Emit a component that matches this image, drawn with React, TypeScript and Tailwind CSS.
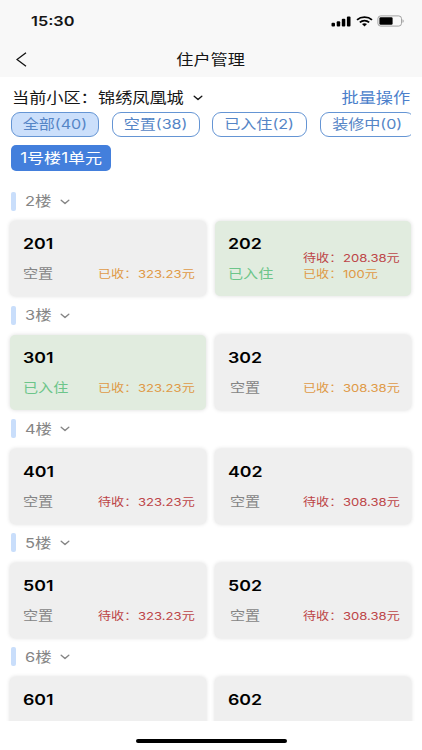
import React from 'react';

type Fee = { label: string; amount: string; tone: 'due' | 'paid' };
type Room = { no: string; occupied?: boolean; fees?: Fee[] };
type Floor = { name: string; rooms: Room[] };

const due = (amount: string): Fee => ({ label: '待收：', amount, tone: 'due' });
const paid = (amount: string): Fee => ({ label: '已收：', amount, tone: 'paid' });

const floors: Floor[] = [
  { name: '2楼', rooms: [{ no: '201', fees: [paid('323.23元')] }, { no: '202', occupied: true, fees: [due('208.38元'), paid('100元')] }] },
  { name: '3楼', rooms: [{ no: '301', occupied: true, fees: [paid('323.23元')] }, { no: '302', fees: [paid('308.38元')] }] },
  { name: '4楼', rooms: [{ no: '401', fees: [due('323.23元')] }, { no: '402', fees: [due('308.38元')] }] },
  { name: '5楼', rooms: [{ no: '501', fees: [due('323.23元')] }, { no: '502', fees: [due('308.38元')] }] },
  { name: '6楼', rooms: [{ no: '601' }, { no: '602' }] },
];

const filters = [
  { text: '全部(40)', box: 'w-[88px] mr-[13px] bg-[#cbdffb]' },
  { text: '空置(38)', box: 'w-[88px] mr-[12px]' },
  { text: '已入住(2)', box: 'w-[95px] mr-[13px]' },
  { text: '装修中(0)', box: 'w-[95px]' },
];

/* Wide lettering: text is stretched horizontally from its anchor side. */
function Wide({ className = '', children }: { className?: string; children: React.ReactNode }) {
  return <span className={`inline-block scale-x-[1.2] whitespace-nowrap ${className}`}>{children}</span>;
}

function Chevron({ className }: { className: string }) {
  return (
    <svg className={className} viewBox="0 0 10 6" fill="none" stroke="currentColor" strokeWidth="1.4" strokeLinecap="round" strokeLinejoin="round">
      <path d="M1.2 1.2 5 4.5 8.8 1.2" />
    </svg>
  );
}

function StatusBar() {
  return (
    <div className="flex h-[42px] items-center pl-[31px] pr-[18px]">
      <Wide className="origin-left text-[13.6px] leading-[20px] font-semibold">15:30</Wide>
      <div className="ml-auto flex items-center">
        <svg className="h-[11px] w-[20px]" viewBox="0 0 20 11">
          <rect x="0.5" y="6.8" width="3.5" height="3.7" rx="1" />
          <rect x="5.7" y="5.2" width="3.5" height="5.3" rx="1" />
          <rect x="10.8" y="2.8" width="3.5" height="7.7" rx="1" />
          <rect x="15.9" y="0.6" width="3.6" height="9.9" rx="1" />
        </svg>
        <svg className="ml-[5px] h-[11px] w-[17px]" viewBox="0 0 17 11" fill="none" stroke="black" strokeWidth="1.8">
          <path d="M1 3.9C5.1.3 11.9.3 16 3.9" />
          <path d="M3.8 6.4c2.7-2.2 6.7-2.2 9.4 0" />
          <path d="M6 8.1c1.5-1.1 3.5-1.1 5 0L8.5 10.4Z" fill="black" stroke="none" />
        </svg>
        <svg className="ml-[4px] h-[12px] w-[27px]" viewBox="0 0 27 12">
          <rect x="0.9" y="0.9" width="23.6" height="10.2" rx="2.8" fill="none" stroke="#999" strokeWidth="0.9" />
          <rect x="2.4" y="2.3" width="13.2" height="7.4" rx="1.2" />
          <path d="M25.6 4.2c1.3.5 1.3 3.1 0 3.6Z" fill="#888" />
        </svg>
      </div>
    </div>
  );
}

function RoomCard({ room, right }: { room: Room; right: boolean }) {
  return (
    <div className={`h-[75px] w-[196px] rounded-[5px] pl-[12.5px] pt-[12px] shadow-[0_0_4px_rgba(0,0,0,0.15)] ${room.occupied ? 'bg-[#e1ecdf]' : 'bg-[#efefef]'}`}>
      <div className="flex h-[22px] items-center">
        <Wide className="origin-left text-[14.8px] leading-[22px] font-semibold text-black">{room.no}</Wide>
      </div>
      {room.fees && (
        <div className="flex h-[27px] items-end">
          <div className={`w-[75.5px] text-[12.6px] leading-[16px] ${room.occupied ? 'text-[#6cc58a]' : 'text-[#858585]'} ${right && !room.occupied ? 'pl-[2px]' : ''}`}>
            <Wide className="origin-left">{room.occupied ? '已入住' : '空置'}</Wide>
          </div>
          <div className="flex flex-col">
            {room.fees.map((fee) => (
              <div key={fee.label} className={`flex h-[16px] items-center text-[10.9px] leading-[16px] ${fee.tone === 'due' ? 'text-[#bd4548]' : 'text-[#df9a47]'}`}>
                <Wide className="w-[40px] origin-left">{fee.label}</Wide>
                <Wide className="origin-left">{fee.amount}</Wide>
              </div>
            ))}
          </div>
        </div>
      )}
    </div>
  );
}

export default function App() {
  return (
    <div className="flex h-[750px] w-[422px] flex-col overflow-hidden bg-white font-['Inter','Noto_Sans_CJK_SC',sans-serif] text-[#151515]">
      <header className="h-[77px] shrink-0 bg-[#f8f8f8]">
        <StatusBar />
        <div className="flex h-[34px] items-center pl-[16px]">
          <svg className="h-[15px] w-[11px]" viewBox="0 0 11 15" fill="none" stroke="#111" strokeWidth="1.3">
            <path d="M10 .8 1 7.5l9 6.7" />
          </svg>
          <div className="-ml-[27px] flex-1 text-center">
            <Wide className="text-[14.3px] leading-[22px]">住户管理</Wide>
          </div>
        </div>
      </header>

      <div className="flex h-[35px] shrink-0 items-center pt-[6px] pl-[12px] pr-[12px] text-[14.3px] leading-[22px]">
        <Wide className="w-[86px] origin-left">当前小区：</Wide>
        <Wide className="w-[94.5px] origin-left">锦绣凤凰城</Wide>
        <Chevron className="h-[6px] w-[10px]" />
        <Wide className="ml-auto origin-right text-[#4c7fcb]">批量操作</Wide>
      </div>

      <div className="mr-[11px] ml-[11px] flex h-[25px] shrink-0 overflow-hidden">
        {filters.map((f) => (
          <div key={f.text} className={`flex h-[25px] shrink-0 items-center justify-center rounded-[9px] border border-[#6595d4] pb-[1px] text-[13.4px] leading-[20px] text-[#5585c6] ${f.box}`}>
            <Wide>{f.text}</Wide>
          </div>
        ))}
      </div>

      <div className="mt-[8px] ml-[11px] flex h-[26px] w-[100px] shrink-0 items-center justify-center rounded-[5px] bg-[#437fdc] text-[14.2px] leading-[20px] text-white">
        <Wide>1号楼1单元</Wide>
      </div>

      <main className="flex h-[550px] shrink-0 flex-col overflow-hidden pt-[16.4px]">
        {floors.map((floor) => (
          <section key={floor.name} className="h-[113.8px] shrink-0">
            <div className="flex h-[34px] items-center pb-[6px] pl-[11px] text-[#858585]">
              <div className="h-[19px] w-[5px] rounded-[2px] bg-[#c9defb]" />
              <Wide className="ml-[9px] w-[35px] origin-left text-[13.7px] leading-[20px]">{floor.name}</Wide>
              <Chevron className="mt-[1px] h-[6px] w-[10px]" />
            </div>
            <div className="flex gap-[9px] pl-[10px]">
              {floor.rooms.map((room, i) => (
                <RoomCard key={room.no} room={room} right={i === 1} />
              ))}
            </div>
          </section>
        ))}
      </main>

      <footer className="flex flex-1 items-start justify-center pt-[18px]">
        <div className="h-[4px] w-[151px] rounded-full bg-black" />
      </footer>
    </div>
  );
}
